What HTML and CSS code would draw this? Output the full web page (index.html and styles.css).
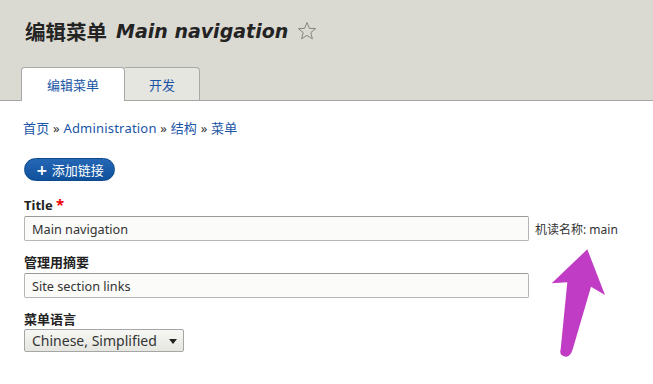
FILE: index.html
```html
<!DOCTYPE html>
<html lang="zh-CN">
<head>
<meta charset="utf-8">
<title>编辑菜单 Main navigation</title>
<link rel="stylesheet" href="styles.css">
</head>
<body>
<header class="page-header">
  <h1 class="page-title"><span class="title-cjk">编辑菜单</span> <em>Main navigation</em>
    <svg class="star" width="20" height="20" viewBox="0 0 20 20"><polygon points="10,1.5 12.4,7.3 18.6,7.6 13.8,11.6 15.4,17.8 10,14.4 4.6,17.8 6.2,11.6 1.4,7.6 7.6,7.3" fill="none" stroke="#85857a" stroke-width="1"/></svg>
  </h1>
  <nav class="tabs">
    <a class="tab tab-active">编辑菜单</a>
    <a class="tab">开发</a>
  </nav>
</header>
<main class="content">
  <div class="breadcrumb"><a>首页</a> » <a>Administration</a> » <a>结构</a> » <a>菜单</a></div>
  <a class="button-primary"><span class="plus">+</span>添加链接</a>
  <div class="form-item first">
    <label class="label">Title <span class="req">*</span></label>
    <div class="input-row">
      <input class="text-input" type="text" value="Main navigation">
      <span class="machine">机读名称: main</span>
    </div>
  </div>
  <div class="form-item">
    <label class="label">管理用摘要</label>
    <input class="text-input" type="text" value="Site section links">
  </div>
  <div class="form-item">
    <label class="label tight">菜单语言</label>
    <span class="select-wrap">
      <span class="select">Chinese, Simplified</span>
    </span>
  </div>
</main>
<svg class="annot-arrow" width="80" height="125" viewBox="0 0 80 125"><path d="M47.3 9.3 L65 55 L51 46.7 L32.5 110 Q29 120 21.5 115 Q19.5 113 20.7 109 L27.3 42.3 L11.7 43.3 Z" fill="#c03cc4"/></svg>
</body>
</html>
```
FILE: styles.css
```css
html, body {
  margin: 0;
  padding: 0;
  background: #fff;
}
body {
  font-family: "Noto Sans", "Noto Sans CJK SC", sans-serif;
  color: #222;
  font-size: 13px;
  position: relative;
  min-height: 384px;
}
.page-header {
  background: #dbdad2;
  padding: 17px 0 0 21px;
  border-bottom: 1px solid #a6a6a6;
}
.page-title {
  margin: 0 0 0 4px;
  font-size: 20px;
  line-height: 28px;
  font-weight: bold;
  color: #232323;
  display: flex;
  align-items: center;
}
.title-cjk {
  font-size: 20.5px;
  font-family: "Noto Sans CJK SC", sans-serif;
}
.page-title em {
  font-family: "DejaVu Sans", sans-serif;
  font-size: 19px;
  font-style: oblique;
  margin-left: 9px;
}
.star {
  margin-left: 9px;
}
.tabs {
  display: flex;
  align-items: flex-end;
  margin-top: 22px;
  margin-bottom: -1px;
}
.tab {
  display: flex;
  align-items: center;
  height: 33px;
  box-sizing: border-box;
  font-size: 13px;
  color: #1a55a6;
  font-family: "Noto Sans CJK SC", sans-serif;
  background: #e6e6e0;
  border: 1px solid #a8a8a8;
  border-left: none;
  border-bottom: none;
  border-radius: 0 4px 0 0;
  padding: 0 24px;
  margin-bottom: 1px;
}
.tab-active {
  position: relative;
  height: 34px;
  margin-bottom: 0;
  background: #fff;
  border-left: 1px solid #a8a8a8;
  border-radius: 4px 4px 0 0;
  padding: 0 25px;
}
.content {
  padding: 18px 24px 0 24px;
}
.breadcrumb {
  line-height: 18px;
  font-size: 13px;
  letter-spacing: 0.2px;
  color: #333;
  margin: 0 0 21px -1px;
}
.breadcrumb a {
  color: #1a55a6;
}
.button-primary {
  display: inline-flex;
  align-items: center;
  height: 23px;
  box-sizing: border-box;
  padding: 0 10px 0 11px;
  border-radius: 12px;
  background: linear-gradient(#2567b5, #0f519c);
  border: 1px solid #0c4a8c;
  color: #fff;
  font-size: 13px;
  font-family: "Noto Sans CJK SC", sans-serif;
}
.plus {
  font-family: "DejaVu Sans", sans-serif;
  font-weight: bold;
  font-size: 14px;
  margin-right: 4px;
  line-height: 1;
}
.form-item {
  margin-top: 12px;
}
.form-item.first {
  margin-top: 14px;
}
.label {
  display: block;
  font-weight: bold;
  line-height: 18px;
  margin-bottom: 2px;
  font-size: 13px;
  color: #222;
}
.label.tight {
  margin-bottom: 1px;
}
.req {
  color: #e00;
  font-size: 15px;
}
.input-row {
  display: flex;
  align-items: center;
}
.text-input {
  width: 505px;
  height: 25px;
  box-sizing: border-box;
  border: 1px solid #b5b5b5;
  border-top-color: #999;
  border-radius: 2px;
  background: #fbfbf9;
  padding: 0 8px 0 7px;
  font-family: "Noto Sans", sans-serif;
  font-size: 12.7px;
  color: #333;
  margin: 0;
  display: block;
}
.machine {
  margin-left: 6px;
  font-size: 12px;
  color: #333;
}
.select-wrap {
  position: relative;
  display: inline-block;
}
.select {
  display: flex;
  align-items: center;
  width: 160px;
  height: 23px;
  box-sizing: border-box;
  border: 1px solid #a6a6a6;
  border-radius: 2px;
  background: linear-gradient(#f7f7f4, #e6e6e0);
  padding: 0 8px 0 7px;
  font-size: 14px;
  color: #333;
}
.select-wrap::after {
  content: "";
  position: absolute;
  right: 7px;
  top: 10px;
  border-left: 4px solid transparent;
  border-right: 4px solid transparent;
  border-top: 5px solid #222;
}
.annot-arrow {
  position: absolute;
  left: 540px;
  top: 240px;
}
```
